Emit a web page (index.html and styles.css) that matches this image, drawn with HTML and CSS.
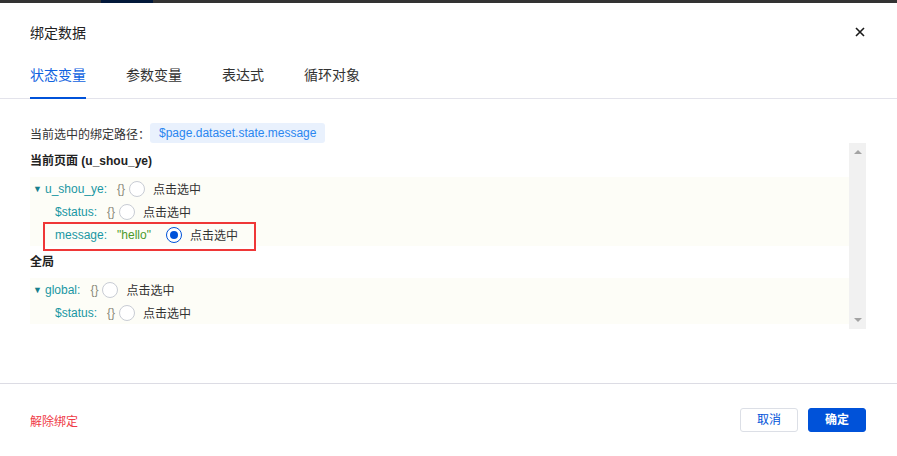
FILE: index.html
```html
<!DOCTYPE html>
<html lang="zh-CN">
<head>
  <meta charset="UTF-8">
  <title>绑定数据</title>
  <link rel="stylesheet" href="styles.css">
</head>
<body>
<div class="topbar"><div class="topbar-active"></div></div>
<div class="dialog">
  <div class="header">
    <div class="title">绑定数据</div>
    <svg class="close" width="10" height="10" viewBox="0 0 10 10">
      <path d="M1 1L9 9M9 1L1 9" stroke="#1a1a1a" stroke-width="1.6" fill="none"/>
    </svg>
  </div>
  <div class="tabs">
    <div class="tab active">状态变量</div>
    <div class="tab">参数变量</div>
    <div class="tab">表达式</div>
    <div class="tab">循环对象</div>
  </div>
  <div class="body">
    <div class="path">
      <span>当前选中的绑定路径：</span>
      <span class="path-tag">$page.dataset.state.message</span>
    </div>
    <div class="scroll">
      <div class="scroll-content">
        <div class="section-title">当前页面 (u_shou_ye)</div>
        <div class="tree">
          <div class="row">
            <span class="arrow">&#9660;</span>
            <span class="key">u_shou_ye:</span>
            <span class="val obj">{}</span>
            <span class="radio"></span>
            <span class="pick">点击选中</span>
          </div>
          <div class="row child">
            <span class="key">$status:</span>
            <span class="val obj">{}</span>
            <span class="radio"></span>
            <span class="pick">点击选中</span>
          </div>
          <div class="row child picked">
            <span class="key">message:</span>
            <span class="val str">"hello"</span>
            <span class="radio checked"></span>
            <span class="pick">点击选中</span>
          </div>
        </div>
        <div class="section-title">全局</div>
        <div class="tree">
          <div class="row">
            <span class="arrow">&#9660;</span>
            <span class="key">global:</span>
            <span class="val obj">{}</span>
            <span class="radio"></span>
            <span class="pick">点击选中</span>
          </div>
          <div class="row child">
            <span class="key">$status:</span>
            <span class="val obj">{}</span>
            <span class="radio"></span>
            <span class="pick">点击选中</span>
          </div>
        </div>
      </div>
      <div class="scrollbar">
        <span class="sb-up"></span>
        <span class="sb-down"></span>
      </div>
    </div>
  </div>
  <div class="footer">
    <div class="unbind">解除绑定</div>
    <div class="actions">
      <div class="btn">取消</div>
      <div class="btn primary">确定</div>
    </div>
  </div>
</div>
</body>
</html>
```

FILE: styles.css
```css
html, body {
  margin: 0;
  padding: 0;
}

body {
  width: 897px;
  height: 456px;
  overflow: hidden;
  background: #fff;
  font-family: "Liberation Sans", Arial, "Noto Sans CJK SC", sans-serif;
  font-size: 12px;
  color: #333;
}

.topbar {
  height: 3px;
  background: #333;
}

.topbar-active {
  margin-left: 101px;
  width: 52px;
  height: 3px;
  background: #02183a;
}

.header {
  height: 57px;
  padding: 0 32px 1px 30px;
  display: flex;
  align-items: center;
  justify-content: space-between;
}

.title {
  font-size: 14px;
  color: #222;
}

.close {
  display: block;
}

.tabs {
  display: flex;
  gap: 40px;
  height: 37px;
  padding: 0 30px;
  border-bottom: 1px solid #e3e3eb;
}

.tab {
  box-sizing: border-box;
  height: 38px;
  padding-top: 4px;
  line-height: 20px;
  font-size: 14px;
  color: #333;
  border-bottom: 2px solid transparent;
}

.tab.active {
  color: #0f62e0;
  border-bottom-color: #0052d9;
}

.body {
  padding: 24px 31px 0 30px;
  height: 260px;
}

.path {
  display: flex;
  align-items: center;
  height: 20px;
  color: #333;
}

.path-tag {
  height: 20px;
  line-height: 20px;
  padding: 0 9px;
  border-radius: 3px;
  background: #e9f1fd;
  color: #2a86f0;
}

.scroll {
  display: flex;
  height: 186px;
}

.scroll-content {
  flex: 1;
  padding-top: 2px;
}

.section-title {
  height: 32px;
  line-height: 32px;
  font-weight: bold;
  color: #222;
}

.tree {
  background: #fdfdf7;
}

.row {
  display: flex;
  align-items: center;
  height: 23px;
  padding-left: 3px;
}

.row.child {
  padding-left: 25px;
}

.row.picked {
  position: relative;
}

.row.picked::after {
  content: '';
  position: absolute;
  left: 13px;
  top: -1px;
  width: 213px;
  height: 29px;
  box-sizing: border-box;
  border: 2px solid #ef3737;
}

.arrow {
  font-size: 9px;
  color: #167f8c;
  width: 12px;
}

.key {
  color: #1a97a3;
}

.val {
  margin-left: 10px;
}

.val.obj {
  color: #8a8a7a;
  margin-right: 4px;
}

.val.str {
  color: #4c9a2a;
  margin-right: 15px;
}

.radio {
  box-sizing: border-box;
  width: 16px;
  height: 16px;
  border: 1px solid #c8ccd4;
  border-radius: 50%;
  background: #fff;
  display: flex;
  align-items: center;
  justify-content: center;
}

.radio.checked {
  border-color: #0052d9;
}

.radio.checked::before {
  content: '';
  width: 8px;
  height: 8px;
  border-radius: 50%;
  background: #0052d9;
}

.pick {
  margin-left: 8px;
  color: #333;
}

.scrollbar {
  width: 17px;
  background: #f1f1f1;
  display: flex;
  flex-direction: column;
  justify-content: space-between;
  align-items: center;
  padding: 7px 0;
  box-sizing: border-box;
}

.sb-up {
  width: 0;
  height: 0;
  border-left: 4px solid transparent;
  border-right: 4px solid transparent;
  border-bottom: 4px solid #a3a3a3;
}

.sb-down {
  width: 0;
  height: 0;
  border-left: 4px solid transparent;
  border-right: 4px solid transparent;
  border-top: 4px solid #a3a3a3;
}

.footer {
  border-top: 1px solid #dcdce4;
  height: 72px;
  padding: 0 31px 0 30px;
  display: flex;
  align-items: center;
  justify-content: space-between;
}

.unbind {
  color: #ef3b47;
}

.actions {
  display: flex;
  gap: 10px;
}

.btn {
  box-sizing: border-box;
  height: 24px;
  line-height: 22px;
  padding: 0 16px;
  border: 1px solid #dcdfe6;
  border-radius: 3px;
  color: #0052d9;
  background: #fff;
}

.btn.primary {
  background: #0052d9;
  border-color: #0052d9;
  color: #fff;
  font-weight: bold;
}
```
